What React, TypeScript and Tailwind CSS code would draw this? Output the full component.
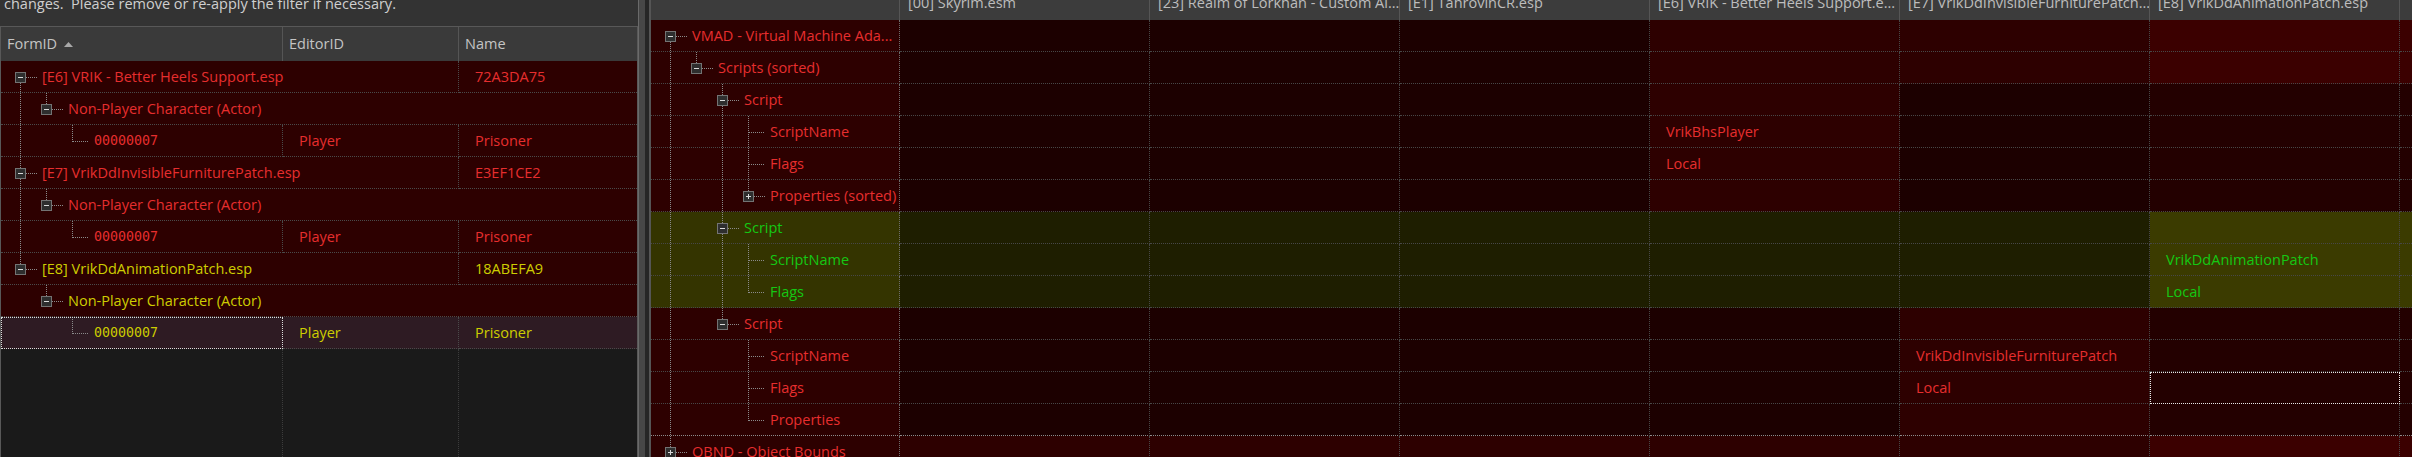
import * as React from 'react';

type Tone = 'red' | 'yellow' | 'green';

const toneText: Record<Tone, string> = {
  red: 'text-[#e62e2e]',
  yellow: 'text-[#cdcd00]',
  green: 'text-[#14c814]',
};

const mono = "font-['DejaVu_Sans_Mono',monospace] text-[13.3px]";
const DOT = '#8a8a8a';

// tree connector column: x of the guide line for a given level
const levelX = (l: number) => 19 + l * 26;

type GuideInfo = { cont: boolean[]; next: boolean; first: boolean };

const guidesFor = (depths: number[], i: number, openEnd = false): GuideInfo => {
  const d = depths[i];
  const hasNext = (level: number) => {
    for (let j = i + 1; j < depths.length; j++) {
      if (depths[j] <= level) return depths[j] === level;
    }
    return openEnd && level === 0;
  };
  return {
    cont: Array.from({ length: d }, (_, l) => hasNext(l)),
    next: hasNext(d),
    first: i === 0,
  };
};

const Guides = ({ depth, box, info }: { depth: number; box?: '-' | '+'; info: GuideInfo }) => {
  const col = levelX(depth);
  const c = col + 0.5;
  const w = col + 22;
  return (
    <svg width={w} height={31} className="shrink-0" shapeRendering="crispEdges">
      <g stroke={DOT} strokeDasharray="1 1" fill="none">
        {info.cont.map((on, l) =>
          on ? <line key={l} x1={levelX(l) + 0.5} x2={levelX(l) + 0.5} y1={0} y2={31} /> : null
        )}
        {!info.first && <line x1={c} x2={c} y1={0} y2={box ? 11 : 16.5} />}
        {info.next && <line x1={c} x2={c} y1={box ? 22 : 16} y2={31} />}
        <line x1={box ? col + 6 : col + 1} x2={w - 5} y1={16.5} y2={16.5} />
      </g>
      {box && (
        <g>
          <rect x={col - 4.5} y={11.5} width={10} height={10} fill="#2e2e2e" stroke="#737373" />
          <line x1={col - 2} x2={col + 3} y1={16.5} y2={16.5} stroke="#dadada" />
          {box === '+' && <line x1={c} x2={c} y1={14} y2={19} stroke="#dadada" />}
        </g>
      )}
    </svg>
  );
};

type LeftRow = {
  depth: number;
  box?: '-' | '+';
  kind: 'file' | 'group' | 'record';
  label: string;
  editorId?: string;
  name?: string;
  tone: Tone;
  selected?: boolean;
};

const leftRows: LeftRow[] = [
  { depth: 0, box: '-', kind: 'file', label: '[E6] VRIK - Better Heels Support.esp', name: '72A3DA75', tone: 'red' },
  { depth: 1, box: '-', kind: 'group', label: 'Non-Player Character (Actor)', tone: 'red' },
  { depth: 2, kind: 'record', label: '00000007', editorId: 'Player', name: 'Prisoner', tone: 'red' },
  { depth: 0, box: '-', kind: 'file', label: '[E7] VrikDdInvisibleFurniturePatch.esp', name: 'E3EF1CE2', tone: 'red' },
  { depth: 1, box: '-', kind: 'group', label: 'Non-Player Character (Actor)', tone: 'red' },
  { depth: 2, kind: 'record', label: '00000007', editorId: 'Player', name: 'Prisoner', tone: 'red' },
  { depth: 0, box: '-', kind: 'file', label: '[E8] VrikDdAnimationPatch.esp', name: '18ABEFA9', tone: 'yellow' },
  { depth: 1, box: '-', kind: 'group', label: 'Non-Player Character (Actor)', tone: 'yellow' },
  { depth: 2, kind: 'record', label: '00000007', editorId: 'Player', name: 'Prisoner', tone: 'yellow', selected: true },
];

const leftDepths = leftRows.map(r => r.depth);
const gridCell = 'h-full border-b border-dotted border-[#4a4a4a] flex items-center overflow-hidden whitespace-nowrap';

const LeftTableRow = ({ row, i }: { row: LeftRow; i: number }) => {
  const info = guidesFor(leftDepths, i);
  const bg = row.selected ? 'bg-[#2e1b23]' : 'bg-[#2d0000]';
  const tree = (
    <>
      <Guides depth={row.depth} box={row.box} info={info} />
      <span className={row.kind === 'record' ? mono : ''}>{row.label}</span>
    </>
  );

  return (
    <div className={`flex h-8 shrink-0 ${bg} ${toneText[row.tone]}`}>
      {row.kind === 'group' && <div className={`${gridCell} flex-1`}>{tree}</div>}
      {row.kind === 'file' && (
        <>
          <div className={`${gridCell} w-[458px] border-r`}>{tree}</div>
          <div className={`${gridCell} flex-1 pl-4`}>{row.name}</div>
        </>
      )}
      {row.kind === 'record' && (
        <>
          <div
            className={`${gridCell} w-[282px] border-r ${
              row.selected ? 'outline-1 outline-dotted outline-[#dcdcdc] -outline-offset-1' : ''
            }`}
          >
            {tree}
          </div>
          <div className={`${gridCell} w-[176px] border-r pl-4`}>{row.editorId}</div>
          <div className={`${gridCell} flex-1 pl-4`}>{row.name}</div>
        </>
      )}
    </div>
  );
};

const LeftPanel = () => (
  <div className="flex w-[638px] shrink-0 flex-col">
    <div className="h-[26px] shrink-0 overflow-hidden bg-[#333333] pl-1 text-[#cfcfcf]">
      <div className="-mt-[6px] whitespace-pre leading-5">
        changes.  Please remove or re-apply the filter if necessary.
      </div>
    </div>
    <div className="flex min-h-0 flex-1 flex-col border-t border-r border-l border-[#585858]">
      <div className="flex h-[34px] shrink-0 bg-[#3a3a3a] text-[#c4c4c4]">
        <div className="flex w-[282px] items-center gap-[7px] border-r border-[#555555] pl-[6px]">
          <span>FormID</span>
          <svg width={9} height={5}>
            <path d="M0 5 L4.5 0 L9 5 Z" fill="#a8a8a8" />
          </svg>
        </div>
        <div className="flex w-[176px] items-center border-r border-[#555555] pl-[6px]">EditorID</div>
        <div className="flex flex-1 items-center pl-[6px]">Name</div>
      </div>
      {leftRows.map((row, i) => (
        <LeftTableRow key={i} row={row} i={i} />
      ))}
      <div className="flex flex-1">
        <div className="w-[282px] border-r border-dotted border-[#3c3c3c]" />
        <div className="w-[176px] border-r border-dotted border-[#3c3c3c]" />
        <div className="flex-1" />
      </div>
    </div>
  </div>
);

const Splitter = () => (
  <div className="flex w-[13px] shrink-0">
    <div className="w-px bg-[#6a6a6a]" />
    <div className="w-[6px] bg-[#474747]" />
    <div className="w-[4px] bg-[#262626]" />
    <div className="w-[2px] bg-[#555555]" />
  </div>
);

const plugins = [
  '[00] Skyrim.esm',
  '[23] Realm of Lorkhan - Custom Al...',
  '[E1] TahrovinCR.esp',
  '[E6] VRIK - Better Heels Support.e...',
  '[E7] VrikDdInvisibleFurniturePatch....',
  '[E8] VrikDdAnimationPatch.esp',
];

type RightRow = {
  depth: number;
  box?: '-' | '+';
  label: string;
  tone: 'red' | 'green';
  present: number[];
  values?: Record<number, string>;
  focus?: number;
  rule?: boolean;
};

const rightRows: RightRow[] = [
  { depth: 0, box: '-', label: 'VMAD - Virtual Machine Ada...', tone: 'red', present: [3, 4, 5] },
  { depth: 1, box: '-', label: 'Scripts (sorted)', tone: 'red', present: [3, 4, 5] },
  { depth: 2, box: '-', label: 'Script', tone: 'red', present: [3] },
  { depth: 3, label: 'ScriptName', tone: 'red', present: [3], values: { 3: 'VrikBhsPlayer' } },
  { depth: 3, label: 'Flags', tone: 'red', present: [3], values: { 3: 'Local' } },
  { depth: 3, box: '+', label: 'Properties (sorted)', tone: 'red', present: [3] },
  { depth: 2, box: '-', label: 'Script', tone: 'green', present: [5] },
  { depth: 3, label: 'ScriptName', tone: 'green', present: [5], values: { 5: 'VrikDdAnimationPatch' } },
  { depth: 3, label: 'Flags', tone: 'green', present: [5], values: { 5: 'Local' } },
  { depth: 2, box: '-', label: 'Script', tone: 'red', present: [4] },
  { depth: 3, label: 'ScriptName', tone: 'red', present: [4], values: { 4: 'VrikDdInvisibleFurniturePatch' } },
  { depth: 3, label: 'Flags', tone: 'red', present: [4], values: { 4: 'Local' }, focus: 5 },
  { depth: 3, label: 'Properties', tone: 'red', present: [4], rule: true },
  { depth: 0, box: '+', label: 'OBND - Object Bounds', tone: 'red', present: [0, 1, 2, 3, 4, 5] },
];

const rightDepths = rightRows.map(r => r.depth);

const cellBg = (row: RightRow, col: number) => {
  const on = row.present.includes(col);
  const last = col === plugins.length - 1;
  if (row.tone === 'green') return last && on ? 'bg-[#3b3b00]' : 'bg-[#1e1e00]';
  if (last) return on ? 'bg-[#3b0000]' : 'bg-[#230000]';
  return on ? 'bg-[#2d0000]' : 'bg-[#1c0000]';
};

const RightTableRow = ({ row, i }: { row: RightRow; i: number }) => {
  const info = guidesFor(rightDepths, i, true);
  // the bottom rule under the last VMAD element is drawn a little brighter
  const bottom = row.rule ? 'border-b-[#8c8c8c]' : 'border-b-[#474747]';
  return (
    <div className={`flex h-8 shrink-0 ${toneText[row.tone]}`}>
      <div
        className={`flex h-full w-[249px] shrink-0 items-center overflow-hidden whitespace-nowrap border-r border-b border-dotted border-r-[#6c6c6c] ${bottom} ${
          row.tone === 'green' ? 'bg-[#343400]' : 'bg-[#2d0000]'
        }`}
      >
        <Guides depth={row.depth} box={row.box} info={info} />
        <span>{row.label}</span>
      </div>
      {plugins.map((_, col) => (
        <div
          key={col}
          className={`flex h-full w-[250px] shrink-0 items-center overflow-hidden whitespace-nowrap border-r border-b border-dotted border-r-[#474747] pl-4 ${bottom} ${cellBg(
            row,
            col
          )} ${row.focus === col ? 'outline-1 outline-dotted outline-[#e6e6e6] -outline-offset-1' : ''}`}
        >
          {row.values?.[col]}
        </div>
      ))}
      <div className={`h-full flex-1 border-b border-dotted ${bottom} ${cellBg(row, plugins.length - 1)}`} />
    </div>
  );
};

const RightPanel = () => (
  <div className="flex min-w-0 flex-1 flex-col">
    <div className="h-[20px] shrink-0 overflow-hidden">
      <div className="-mt-[14px] flex h-[34px] bg-[#3c3c3c] text-[#bdbdbd]">
        <div className="w-[249px] shrink-0 border-r border-[#555555]" />
        {plugins.map(p => (
          <div
            key={p}
            className="flex w-[250px] shrink-0 items-center overflow-hidden whitespace-nowrap border-r border-[#555555] pl-2"
          >
            {p}
          </div>
        ))}
        <div className="flex-1" />
      </div>
    </div>
    {rightRows.map((row, i) => (
      <RightTableRow key={i} row={row} i={i} />
    ))}
  </div>
);

const App = () => (
  <div className="flex h-[457px] w-[2412px] overflow-hidden bg-[#1a1a1a] font-['Open_Sans','Noto_Sans',sans-serif] text-[14.5px] leading-5">
    <LeftPanel />
    <Splitter />
    <RightPanel />
  </div>
);

export default App;
